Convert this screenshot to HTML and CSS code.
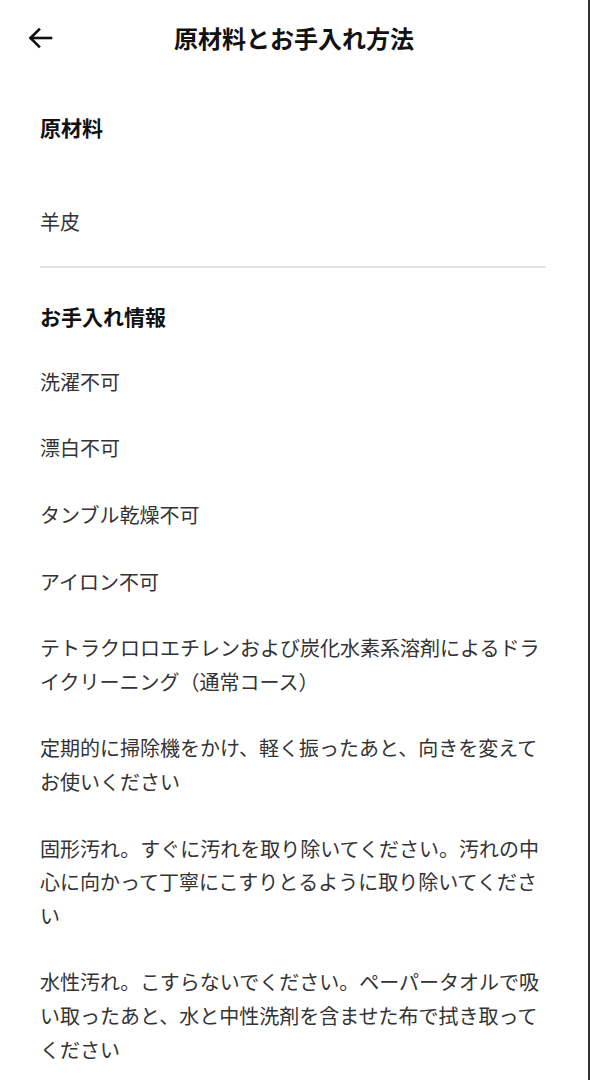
FILE: index.html
```html
<!DOCTYPE html>
<html lang="ja">
<head>
<meta charset="utf-8">
<title>原材料とお手入れ方法</title>
<link rel="stylesheet" href="styles.css">
</head>
<body>
<div class="page">
  <header class="header">
    <button class="back" aria-label="戻る">
      <svg width="28" height="28" viewBox="0 0 28 28" fill="none" stroke="#111" stroke-width="2.6" stroke-linecap="square" stroke-linejoin="miter">
        <path d="M25 14H5"/>
        <path d="M13 5.5L4.5 14L13 22.5"/>
      </svg>
    </button>
    <h1 class="title">原材料とお手入れ方法</h1>
  </header>
  <main class="content">
    <section class="section materials">
      <h2 class="heading">原材料</h2>
      <p class="material">羊皮</p>
    </section>
    <hr class="divider">
    <section class="section care">
      <h2 class="heading">お手入れ情報</h2>
      <ul class="care-list">
        <li>洗濯不可</li>
        <li>漂白不可</li>
        <li>タンブル乾燥不可</li>
        <li>アイロン不可</li>
        <li>テトラクロロエチレンおよび炭化水素系溶剤によるドライクリーニング（通常コース）</li>
        <li>定期的に掃除機をかけ、軽く振ったあと、向きを変えてお使いください</li>
        <li>固形汚れ。すぐに汚れを取り除いてください。汚れの中心に向かって丁寧にこすりとるように取り除いてください</li>
        <li>水性汚れ。こすらないでください。ペーパータオルで吸い取ったあと、水と中性洗剤を含ませた布で拭き取ってください</li>
      </ul>
    </section>
  </main>
</div>
</body>
</html>
```

FILE: styles.css
```css
* { box-sizing: border-box; }
html, body {
  margin: 0;
  padding: 0;
  background: #fff;
}
body {
  font-family: "Noto Sans CJK JP", "Noto Sans", sans-serif;
  color: #333;
}
.page {
  width: 590px;
  min-height: 1080px;
  border-right: 2px solid #333;
  overflow: hidden;
}
.header {
  position: relative;
  height: 76px;
  display: flex;
  align-items: center;
  justify-content: center;
}
.back {
  position: absolute;
  left: 26px;
  top: 24px;
  width: 28px;
  height: 28px;
  padding: 0;
  border: 0;
  background: none;
  display: flex;
}
.title {
  margin: 0;
  font-size: 24px;
  font-weight: 700;
  color: #111;
  line-height: 1;
}
.content {
  padding: 35px 42px 0 40px;
}
.heading {
  margin: 0;
  font-size: 21px;
  font-weight: 700;
  color: #111;
  line-height: 33.6px;
}
.material {
  margin: 60px 0 0;
  font-size: 20px;
  line-height: 33.6px;
}
.divider {
  margin: 28px 0 0;
  border: 0;
  height: 2px;
  background: #e4e4e4;
  width: 506px;
}
.care {
  padding-top: 32px;
}
.care-list {
  list-style: none;
  margin: 31px 0 0;
  padding: 0;
  display: flex;
  flex-direction: column;
  gap: 33px;
}
.care-list li {
  font-size: 20px;
  line-height: 33.6px;
  max-width: 508px;
}
```
